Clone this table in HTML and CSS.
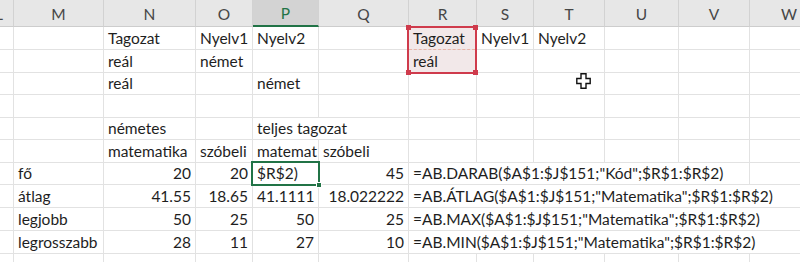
FILE: index.html
```html
<!DOCTYPE html>
<html lang="hu">
<head>
    <meta charset="UTF-8">
    <title>Munka1</title>
    <link rel="stylesheet" href="styles.css">
</head>
<body>
    <div class="sheet">
        <table class="grid">
            <colgroup>
                <col class="c-l"><col class="c-m"><col class="c-n"><col class="c-o">
                <col class="c-p"><col class="c-q"><col class="c-r"><col class="c-s">
                <col class="c-t"><col class="c-u"><col class="c-v"><col class="c-w">
            </colgroup>
            <thead>
                <tr class="head">
                    <th>L</th><th>M</th><th>N</th><th>O</th><th class="on">P</th><th>Q</th>
                    <th>R</th><th>S</th><th>T</th><th>U</th><th>V</th><th>W</th>
                </tr>
            </thead>
            <tbody>
                <tr class="r23">
                    <td></td><td></td><td>Tagozat</td><td>Nyelv1</td><td>Nyelv2</td><td></td>
                    <td class="crit">Tagozat</td><td>Nyelv1</td><td>Nyelv2</td><td></td><td></td><td></td>
                </tr>
                <tr class="r23">
                    <td></td><td></td><td>reál</td><td>német</td><td></td><td></td>
                    <td class="crit">reál</td><td></td><td></td><td></td><td></td><td></td>
                </tr>
                <tr class="r22">
                    <td></td><td></td><td>reál</td><td></td><td>német</td><td></td>
                    <td></td><td></td><td></td><td></td><td></td><td></td>
                </tr>
                <tr class="r23">
                    <td></td><td></td><td></td><td></td><td></td><td></td>
                    <td></td><td></td><td></td><td></td><td></td><td></td>
                </tr>
                <tr class="r22">
                    <td></td><td></td><td>németes</td><td></td><td colspan="2">teljes tagozat</td>
                    <td></td><td></td><td></td><td></td><td></td><td></td>
                </tr>
                <tr class="r23">
                    <td></td><td></td><td>matematika</td><td>szóbeli</td><td class="clip">matemat</td><td>szóbeli</td>
                    <td></td><td></td><td></td><td></td><td></td><td></td>
                </tr>
                <tr class="r22">
                    <td></td><td>fő</td><td class="num">20</td><td class="num">20</td><td>$R$2)</td><td class="num">45</td>
                    <td colspan="5">=AB.DARAB($A$1:$J$151;"Kód";$R$1:$R$2)</td><td></td>
                </tr>
                <tr class="r23">
                    <td></td><td>átlag</td><td class="num">41.55</td><td class="num">18.65</td><td class="num">41.1111</td><td class="num">18.022222</td>
                    <td colspan="6">=AB.ÁTLAG($A$1:$J$151;"Matematika";$R$1:$R$2)</td>
                </tr>
                <tr class="r23">
                    <td></td><td>legjobb</td><td class="num">50</td><td class="num">25</td><td class="num">50</td><td class="num">25</td>
                    <td colspan="6">=AB.MAX($A$1:$J$151;"Matematika";$R$1:$R$2)</td>
                </tr>
                <tr class="r23">
                    <td></td><td>legrosszabb</td><td class="num">28</td><td class="num">11</td><td class="num">27</td><td class="num">10</td>
                    <td colspan="6">=AB.MIN($A$1:$J$151;"Matematika";$R$1:$R$2)</td>
                </tr>
                <tr class="r23">
                    <td></td><td></td><td></td><td></td><td></td><td></td>
                    <td></td><td></td><td></td><td></td><td></td><td></td>
                </tr>
            </tbody>
        </table>

        <!-- criteria range picked in the formula -->
        <div class="pick">
            <i class="dot tl"></i><i class="dot tr"></i><i class="dot bl"></i><i class="dot br"></i>
        </div>
        <!-- active cell P7 -->
        <div class="active"><i class="handle"></i></div>

        <svg class="pointer" width="15" height="16" viewBox="0 0 15 16">
            <path d="M5 .8h5v4.7h4.2v5H10v4.7H5v-4.7H.8v-5H5z" fill="#fff" stroke="#111" stroke-width="1.4"/>
        </svg>
    </div>
</body>
</html>
```

FILE: styles.css
```css
* {
    margin: 0;
    padding: 0;
    box-sizing: border-box;
}
body {
    width: 800px;
    height: 262px;
    overflow: hidden;
    background: #fff;
    font-family: Lato, "Liberation Sans", sans-serif;
    font-size: 15.5px;
    color: #1e1e1e;
}
.sheet {
    position: relative;
    width: 800px;
    height: 262px;
    overflow: hidden;
}
.grid {
    table-layout: fixed;
    border-collapse: separate;
    border-spacing: 0;
    width: 844px;
    margin-left: -15px;
}
.c-l { width: 29px; }
.c-m { width: 90px; }
.c-n { width: 92px; }
.c-o { width: 57px; }
.c-p { width: 66px; }
.c-q { width: 90px; }
.c-r { width: 68px; }
.c-s { width: 57px; }
.c-t { width: 71px; }
.c-u { width: 74px; }
.c-v { width: 71px; }
.c-w { width: 79px; }

/* column letters */
.head th {
    height: 27px;
    background: #e7e7e7;
    border-right: 1px solid #d2d2d2;
    border-bottom: 1px solid #cdcdcd;
    font-weight: normal;
    color: #464646;
    text-align: center;
    vertical-align: middle;
    padding-top: 1px;
}
.head th.on {
    background: #d3d3d3;
    color: #217346;
    border-bottom: 2px solid #217346;
}

td {
    border-right: 1px solid #e2e2e2;
    border-bottom: 1px solid #e2e2e2;
    padding: 0 3px 1px 4px;
    white-space: nowrap;
    vertical-align: bottom;
    line-height: 19px;
}
.r23 td { height: 23px; }
.r22 td { height: 22px; }
td.num {
    text-align: right;
    padding-right: 4px;
}
td.clip {
    overflow: hidden;
    text-overflow: clip;
}
td.crit {
    background: #f2e8e9;
}

.pick {
    position: absolute;
    left: 407px;
    top: 26px;
    width: 70px;
    height: 48px;
    border: 2px solid #cf3b4c;
}
.pick::after {
    content: "";
    position: absolute;
    left: 0;
    right: 0;
    top: 21px;
    border-top: 1px dashed #eab3a8;
}
.dot {
    position: absolute;
    width: 5px;
    height: 5px;
    background: #cf3b4c;
}
.dot.tl { left: -3px; top: -3px; }
.dot.tr { right: -3px; top: -3px; }
.dot.bl { left: -3px; bottom: -3px; }
.dot.br { right: -3px; bottom: -3px; }

.active {
    position: absolute;
    left: 251px;
    top: 161px;
    width: 69px;
    height: 25px;
    border: 2px solid #217346;
}
.handle {
    position: absolute;
    right: -4px;
    bottom: -4px;
    width: 6px;
    height: 6px;
    background: #217346;
    border: 1px solid #fff;
}

.pointer {
    position: absolute;
    left: 576px;
    top: 73px;
}
```
